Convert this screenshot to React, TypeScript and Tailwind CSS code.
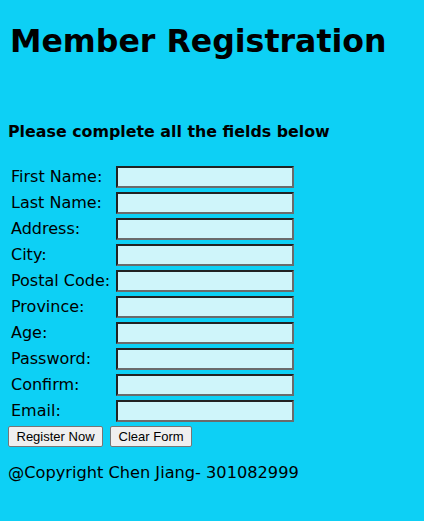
import React from "react";

const fields = [
  "First Name:",
  "Last Name:",
  "Address:",
  "City:",
  "Postal Code:",
  "Province:",
  "Age:",
  "Password:",
  "Confirm:",
  "Email:",
];

export default function App() {
  return (
    <div
      className="min-h-[521px] w-full bg-[#0dd0f5] text-black"
      style={{ fontFamily: '"DejaVu Sans", Verdana, sans-serif' }}
    >
      <div className="px-2 pt-[22px]">
        <h1 className="pl-[2px] text-[31.6px] font-bold leading-[38px]">Member Registration</h1>
        <h3 className="mt-[62px] text-[15.85px] font-bold leading-[20px]">Please complete all the fields below</h3>
        <div className="mt-[24px] grid grid-cols-[108px_178px] gap-y-[4px]">
          {fields.map((f) => (
            <React.Fragment key={f}>
              <div className="flex h-[22px] items-center pl-[3px] text-[16px] leading-[20px]">{f}</div>
              <div className="h-[22px] border-2 border-t-[#222] border-l-[#222] border-b-[#6b6b6b] border-r-[#6b6b6b] bg-[#cff5fa]" />
            </React.Fragment>
          ))}
        </div>
        <div
          className="mt-[4px] flex gap-[7px] text-[13px]"
          style={{ fontFamily: '"Liberation Sans", Arial, sans-serif' }}
        >
          <button className="h-[21px] rounded-[2px] border border-[#767676] bg-[#efefef] px-[7.5px] leading-[19px]">Register Now</button>
          <button className="h-[21px] rounded-[2px] border border-[#767676] bg-[#efefef] px-[7.5px] leading-[19px]">Clear Form</button>
        </div>
        <p className="mt-[16px] text-[16.2px] leading-[20px]">@Copyright Chen Jiang- 301082999</p>
      </div>
    </div>
  );
}
